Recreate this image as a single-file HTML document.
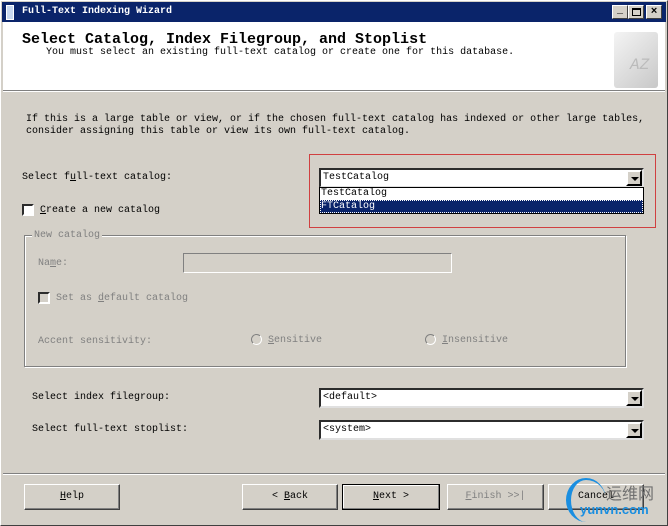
<!DOCTYPE html>
<html><head><style>
*{margin:0;padding:0;box-sizing:border-box}
body{width:668px;height:526px;background:#d4d0c8;font-family:"Liberation Mono","Noto Sans CJK SC",monospace;font-size:10px;color:#000;position:relative;overflow:hidden}
.a{position:absolute;white-space:nowrap}
.win{position:absolute;left:0;top:0;width:668px;height:526px;border:1px solid #fff;border-right-color:#404040;border-bottom-color:#404040}
.combo{position:absolute;background:#fff;border:2px inset #808080;border-right-color:#e0e0e0;border-bottom-color:#e0e0e0;height:20px;font-size:10px;line-height:16px;padding-left:2px}
.arr{position:absolute;right:0;top:0;width:16px;height:16px;background:#d4d0c8;border:2px outset #fff;border-right-color:#404040;border-bottom-color:#404040}
.arr:after{content:"";position:absolute;left:3px;top:5px;border-left:4px solid transparent;border-right:4px solid transparent;border-top:4px solid #000}
.btn{position:absolute;top:484px;height:26px;background:#d4d0c8;border:1px solid #fff;border-right-color:#404040;border-bottom-color:#404040;box-shadow:inset -1px -1px #808080;text-align:center;line-height:24px;font-size:10px}
.dis{color:#808080}
.cb{position:absolute;width:12px;height:12px;background:#fff;border:2px inset #808080;border-right-color:#fff;border-bottom-color:#fff}
</style></head><body>
<div class="win"></div>
<div class="a" style="left:2px;top:2px;width:664px;height:20px;background:#0a246a"></div>
<div class="a" style="left:6px;top:5px;width:8px;height:15px;background:#c8d8f0;border:1px solid #fff"></div>
<div class="a" style="left:22px;top:6px;color:#fff;font-weight:bold;font-size:10px">Full-Text Indexing Wizard</div>
<div class="a" style="left:612px;top:5px;width:16px;height:14px;background:#d4d0c8;border:1px solid #fff;border-right-color:#404040;border-bottom-color:#404040;font-size:10px;line-height:12px;text-align:center;font-weight:bold">_</div>
<div class="a" style="left:628px;top:5px;width:16px;height:14px;background:#d4d0c8;border:1px solid #fff;border-right-color:#404040;border-bottom-color:#404040"><div style="margin:2px 3px;width:9px;height:8px;border:1px solid #000;border-top-width:2px"></div></div>
<div class="a" style="left:646px;top:5px;width:16px;height:14px;background:#d4d0c8;border:1px solid #fff;border-right-color:#404040;border-bottom-color:#404040;font-size:11px;line-height:12px;text-align:center;font-weight:bold">×</div>
<div class="a" style="left:3px;top:22px;width:662px;height:68px;background:#fff"></div>
<div class="a" style="left:22px;top:31px;font-size:15px;font-weight:bold">Select Catalog, Index Filegroup, and Stoplist</div>
<div class="a" style="left:46px;top:47px;font-size:10px">You must select an existing full-text catalog or create one for this database.</div>
<div class="a" style="left:614px;top:32px;width:44px;height:56px;background:linear-gradient(135deg,#f4f4f4,#c8c8c8);border-radius:3px;color:#bbb;font-size:16px;font-style:italic;padding:24px 0 0 16px">AZ</div>
<div class="a" style="left:3px;top:90px;width:662px;height:2px;border-top:1px solid #808080;border-bottom:1px solid #fff"></div>
<div class="a" style="left:26px;top:114px;line-height:12px;font-size:10px">If this is a large table or view, or if the chosen full-text catalog has indexed or other large tables,<br>consider assigning this table or view its own full-text catalog.</div>
<div class="a" style="left:309px;top:154px;width:347px;height:74px;border:1px solid #d04040"></div>
<div class="a" style="left:22px;top:172px;font-size:10px">Select f<u>u</u>ll-text catalog:</div>
<div class="combo" style="left:319px;top:168px;width:325px">TestCatalog<div class="arr"></div></div>
<div class="a" style="left:319px;top:187px;width:325px;height:27px;background:#fff;border:1px solid #000;font-size:10px;line-height:12px;padding-left:1px">TestCatalog<div style="background:#0a246a;color:#fff;border:1px dotted #fff;height:13px;line-height:11px;margin-left:-1px">FTCatalog</div></div>
<div class="cb" style="left:22px;top:204px"></div>
<div class="a" style="left:40px;top:205px;font-size:10px"><u>C</u>reate a new catalog</div>
<div class="a" style="left:24px;top:235px;width:602px;height:132px;border:1px solid #808080;box-shadow:1px 1px #fff,inset 1px 1px #fff"></div>
<div class="a dis" style="left:32px;top:230px;background:#d4d0c8;padding:0 2px;font-size:10px">New catalog</div>
<div class="a dis" style="left:38px;top:258px;font-size:10px">Na<u>m</u>e:</div>
<div class="a" style="left:183px;top:253px;width:269px;height:20px;border:1px solid #808080;border-right-color:#fff;border-bottom-color:#fff"></div>
<div class="cb" style="left:38px;top:292px;background:#d4d0c8"></div>
<div class="a dis" style="left:56px;top:293px;font-size:10px">Set as <u>d</u>efault catalog</div>
<div class="a dis" style="left:38px;top:336px;font-size:10px">Accent sensitivity:</div>
<div class="a" style="left:251px;top:334px;width:11px;height:11px;border-radius:50%;border:1px solid #808080;border-right-color:#fff;border-bottom-color:#fff"></div>
<div class="a dis" style="left:268px;top:335px;font-size:10px"><u>S</u>ensitive</div>
<div class="a" style="left:425px;top:334px;width:11px;height:11px;border-radius:50%;border:1px solid #808080;border-right-color:#fff;border-bottom-color:#fff"></div>
<div class="a dis" style="left:442px;top:335px;font-size:10px"><u>I</u>nsensitive</div>
<div class="a" style="left:32px;top:392px;font-size:10px">Select index filegroup:</div>
<div class="combo" style="left:319px;top:388px;width:325px">&lt;default&gt;<div class="arr"></div></div>
<div class="a" style="left:32px;top:424px;font-size:10px">Select full-text stoplist:</div>
<div class="combo" style="left:319px;top:420px;width:325px">&lt;system&gt;<div class="arr"></div></div>
<div class="a" style="left:3px;top:473px;width:662px;height:2px;border-top:1px solid #808080;border-bottom:1px solid #fff"></div>
<div class="btn" style="left:24px;width:96px"><u>H</u>elp</div>
<div class="btn" style="left:242px;width:96px">&lt; <u>B</u>ack</div>
<div class="btn" style="left:342px;width:98px;border:1px solid #000;box-shadow:inset -1px -1px #808080,inset 1px 1px #fff"><u>N</u>ext &gt;</div>
<div class="btn dis" style="left:447px;width:97px"><u>F</u>inish &gt;&gt;|</div>
<div class="btn" style="left:548px;width:96px">Cancel</div>
<div class="a" style="left:566px;top:478px;width:40px;height:44px;border-radius:50%;border-left:5px solid #1a8ee0;border-top:2px solid #1a8ee0"></div>
<div class="a" style="left:606px;top:480px;font-family:'Noto Sans CJK SC',sans-serif;font-size:16px;color:#707070">运维网</div>
<div class="a" style="left:580px;top:502px;font-family:'Liberation Sans',sans-serif;font-weight:bold;font-size:13px;color:#1a8ee0">yunvn.com</div>
</body></html>
